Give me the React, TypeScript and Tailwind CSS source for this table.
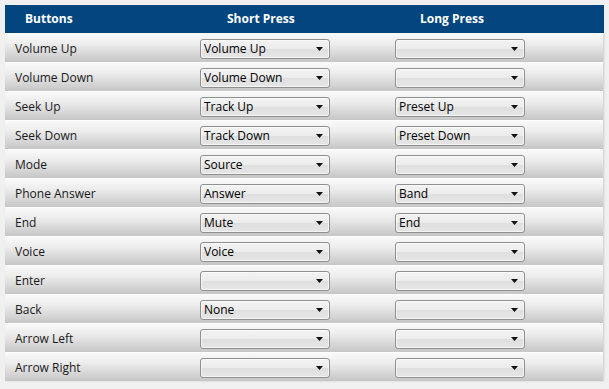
const rows: [string, string, string][] = [
  ['Volume Up', 'Volume Up', ''],
  ['Volume Down', 'Volume Down', ''],
  ['Seek Up', 'Track Up', 'Preset Up'],
  ['Seek Down', 'Track Down', 'Preset Down'],
  ['Mode', 'Source', ''],
  ['Phone Answer', 'Answer', 'Band'],
  ['End', 'Mute', 'End'],
  ['Voice', 'Voice', ''],
  ['Enter', '', ''],
  ['Back', 'None', ''],
  ['Arrow Left', '', ''],
  ['Arrow Right', '', ''],
];

function Combo({ value }: { value: string }) {
  return (
    <div className="w-[130px] h-[20px] rounded-[3px] border border-[#8e8f8f] bg-[linear-gradient(#f3f3f3_0%,#ececec_50%,#dfdfdf_51%,#e6e6e6_100%)] flex items-center pl-[3px] pr-[6px] shadow-[inset_0_0_0_1px_rgba(255,255,255,0.6)]">
      <span className="flex-1 text-[12px] leading-none text-black">{value}</span>
      <svg width="7" height="4" viewBox="0 0 7 4">
        <path d="M0 0H7L3.5 4Z" fill="#111" />
      </svg>
    </div>
  );
}

export default function App() {
  return (
    <div className="w-[609px] h-[389px] bg-[#f0f0f0] pl-[5px] pr-[5px] pt-[5px] font-['Open_Sans',sans-serif]">
      <div className="h-[28px] bg-[#03467f] flex items-center text-white font-bold text-[12px]">
        <div className="w-[195px] pl-[20px]">Buttons</div>
        <div className="w-[195px] pl-[27px]">Short Press</div>
        <div className="pl-[25px]">Long Press</div>
      </div>
      <div className="w-[598px] shadow-[1px_0_2px_rgba(0,0,0,0.15)]">
        {rows.map(([name, shortP, longP]) => (
          <div
            key={name}
            className="h-[29px] border-t border-[#fdfdfd] bg-[linear-gradient(#f9f9f9,#ededed_35%,#c6c6c6)] flex items-center pt-[1px] text-[12px] text-[#1a1a1a]"
          >
            <div className="w-[195px] pl-[10px]">{name}</div>
            <div className="w-[195px]">
              <Combo value={shortP} />
            </div>
            <div>
              <Combo value={longP} />
            </div>
          </div>
        ))}
      </div>
    </div>
  );
}
